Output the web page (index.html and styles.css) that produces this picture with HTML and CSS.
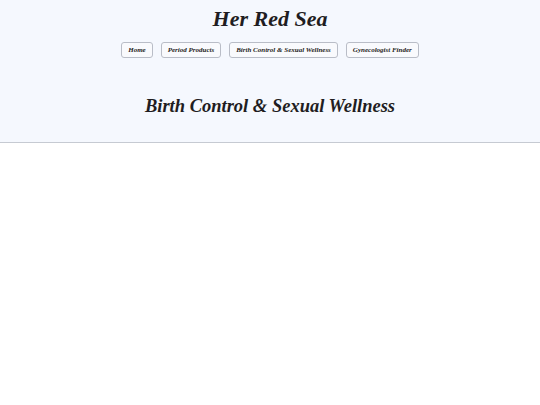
FILE: index.html
```html
<!DOCTYPE html>
<html>
<head>
<meta charset="utf-8">
<link rel="stylesheet" href="styles.css">
</head>
<body>
<header class="site-header">
  <h1 class="brand">Her Red Sea</h1>
  <nav class="nav">
    <button class="nav-btn">Home</button>
    <button class="nav-btn">Period Products</button>
    <button class="nav-btn">Birth Control &amp; Sexual Wellness</button>
    <button class="nav-btn">Gynecologist Finder</button>
  </nav>
  <h2 class="page-title">Birth Control &amp; Sexual Wellness</h2>
</header>
</body>
</html>
```
FILE: styles.css
```css
html, body {
  margin: 0;
  padding: 0;
  background: #ffffff;
}
body {
  font-family: "Liberation Serif", "DejaVu Serif", serif;
  color: #1f1d22;
}
.site-header {
  background: #f5f8fe;
  border-bottom: 1px solid #c6cad2;
  display: flex;
  flex-direction: column;
  align-items: center;
  padding: 4px 0 24px;
}
.brand {
  margin: 0;
  font-size: 22px;
  font-weight: bold;
  font-style: italic;
  line-height: 30px;
}
.nav {
  display: flex;
  gap: 8px;
  margin-top: 8px;
}
.nav-btn {
  font-family: "Liberation Serif", "DejaVu Serif", serif;
  font-style: italic;
  font-size: 7px;
  font-weight: bold;
  color: #1f1d22;
  background: #f9fafd;
  border: 1px solid #b9bdc7;
  border-radius: 3px;
  height: 16px;
  padding: 0 6px;
}
.page-title {
  margin: 36px 0 0;
  font-size: 18.5px;
  font-weight: bold;
  font-style: italic;
  line-height: 24px;
}
```
